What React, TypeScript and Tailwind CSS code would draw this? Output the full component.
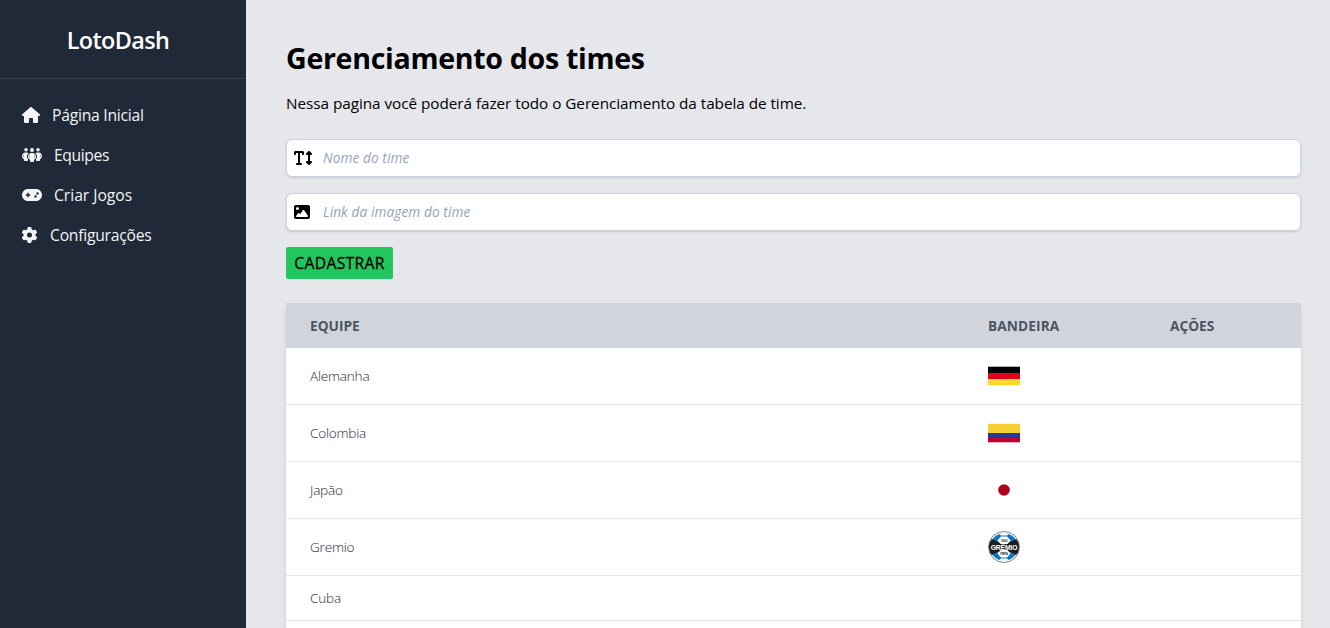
import type { ReactNode } from "react";
import { FaGamepad, FaGear, FaHouse, FaImage, FaPeopleGroup, FaTextHeight } from "react-icons/fa6";

function GermanyFlag() {
  return (
    <svg width="32" height="20" viewBox="0 0 32 20" className="block">
      <rect y="0.7" width="32" height="7" fill="#000" />
      <rect y="7" width="32" height="6.3" fill="#e3001b" />
      <rect y="13" width="32" height="6" fill="#fcd924" />
    </svg>
  );
}

function ColombiaFlag() {
  return (
    <svg width="32" height="20" viewBox="0 0 32 20" className="block">
      <rect y="0.8" width="32" height="10" fill="#f5d033" />
      <rect y="10" width="32" height="5" fill="#233a94" />
      <rect y="14.7" width="32" height="4.6" fill="#c00030" />
    </svg>
  );
}

function JapanFlag() {
  return (
    <svg width="32" height="20" viewBox="0 0 32 20" className="block">
      <rect width="32" height="20" fill="#fff" />
      <circle cx="16" cy="10" r="5.8" fill="#b0001c" />
    </svg>
  );
}

function GremioCrest() {
  return (
    <svg width="32" height="32" viewBox="0 0 32 32" className="block">
      <circle cx="16" cy="16" r="15.5" fill="#fff" stroke="#666" strokeWidth="0.8" />
      <circle cx="16" cy="16" r="13.8" fill="#0b74c4" />
      <path d="M11 2.800Q16 1.200 21 2.800L19 4.600h-6zM9.500 9.500l3.500-4h6l3.500 4-2 3.500h-9zM11 29.200Q16 30.800 21 29.200L19 27.400h-6zM9.500 22.500l3.500 4h6l3.500-4-2-3.500h-9z" fill="#fff" />
      <path d="M4 8Q16 16 28 8Q31 11 31 16Q31 21 28 24Q16 16 4 24Q1 21 1 16Q1 11 4 8Z" fill="#1c1c1c" />
      <path d="M10.500 8.500l3-2.500h5l3 2.500-1.500 4.300q-4 .8-8 0zM10.500 23.500l3 2.500h5l3-2.500-1.500-4.300q-4-.8-8 0z" fill="#fff" />
      <text x="16" y="18.700" textAnchor="middle" textLength="26.500" lengthAdjust="spacingAndGlyphs" fontFamily="Liberation Sans, sans-serif" fontWeight="700" fontSize="7.200" fill="#fff">GRÊMIO</text>
      <text x="16" y="10.500" textAnchor="middle" fontFamily="Liberation Sans, sans-serif" fontWeight="700" fontSize="3.400" fill="#333">1903</text>
      <text x="16" y="24.200" textAnchor="middle" fontFamily="Liberation Sans, sans-serif" fontWeight="700" fontSize="3.200" fill="#333">FBPA</text>
    </svg>
  );
}

const teams: { name: string; flag?: ReactNode }[] = [
  { name: "Alemanha", flag: <GermanyFlag /> },
  { name: "Colombia", flag: <ColombiaFlag /> },
  { name: "Japão", flag: <JapanFlag /> },
  { name: "Gremio", flag: <GremioCrest /> },
  { name: "Cuba" },
];

function NavItem({ icon, label, text }: { icon: ReactNode; label: string; text: string }) {
  return (
    <a href="#" className="flex h-10 items-center gap-3 pl-[22px] text-base text-gray-100">
      {icon}
      <span className={text}>{label}</span>
    </a>
  );
}

function Field({ icon, placeholder }: { icon: ReactNode; placeholder: string }) {
  return (
    <label className="flex h-[38px] items-center rounded-md border border-[#cbd5e1] bg-white pl-[7px] shadow-sm">
      <span className="w-[29px] shrink-0 text-black">{icon}</span>
      <input
        type="text"
        placeholder={placeholder}
        className="h-full min-w-0 flex-1 bg-transparent pb-px text-[13.7px] tracking-[0.07px] outline-none placeholder:text-[#94a3b8] placeholder:italic"
      />
    </label>
  );
}

export default function App() {
  return (
    <div className="flex h-[628px] overflow-hidden bg-[#e5e7eb] font-['Open_Sans','Noto_Sans',sans-serif] text-black">
      <aside className="w-[246px] shrink-0 bg-[#1f2937]">
        <div className="flex h-[79px] items-center justify-center border-b border-[#374151] pt-1 pr-[10px]">
          <h2 className="text-[23.4px] font-semibold tracking-[-0.6px] text-white">LotoDash</h2>
        </div>
        <nav className="pt-4">
          <NavItem icon={<FaHouse className="h-4 w-[18px]" />} label="Página Inicial" text="pt-0.5 text-[15.7px] tracking-[-0.25px]" />
          <NavItem icon={<FaPeopleGroup className="h-4 w-5" />} label="Equipes" text="pt-0.5 text-[15.7px] tracking-[-0.4px]" />
          <NavItem icon={<FaGamepad className="h-4 w-5" />} label="Criar Jogos" text="pt-0.5 text-[15.7px] tracking-[-0.04px]" />
          <NavItem icon={<FaGear className="h-4 w-4 -translate-x-[0.5px]" />} label="Configurações" text="pt-0.5 text-[15.7px] tracking-[-0.25px]" />
        </nav>
      </aside>

      <main className="min-w-0 flex-1 pt-10 pr-[29px] pl-10">
        <h1 className="text-[28.6px] leading-9 font-bold tracking-[-0.32px] whitespace-nowrap">Gerenciamento dos times</h1>
        <p className="mt-[15px] text-[15.3px] leading-6 tracking-[-0.045px] whitespace-nowrap">
          Nessa pagina você poderá fazer todo o Gerenciamento da tabela de time.
        </p>

        <form className="mt-6 flex flex-col items-start gap-4 *:w-full">
          <Field icon={<FaTextHeight className="h-4 w-[18px]" />} placeholder="Nome do time" />
          <Field icon={<FaImage className="h-4 w-4" />} placeholder="Link da imagem do time" />
          <button type="button" className="h-8 max-w-[107px] rounded-xs bg-[#22c55e] pt-0.5 text-[15.7px] font-medium tracking-[0.3px] whitespace-nowrap [-webkit-text-stroke:0.3px_#000]">
            CADASTRAR
          </button>
        </form>

        <table className="mt-6 w-full table-fixed border-separate border-spacing-0 bg-white text-left text-sm shadow-md">
          <colgroup>
            <col />
            <col className="w-[182px]" />
            <col className="w-[155px]" />
          </colgroup>
          <thead className="bg-[#d1d5db] text-[13.7px] text-[#4b5563]">
            <tr className="h-[45px]">
              <th className="px-6 font-bold">EQUIPE</th>
              <th className="px-6 font-bold tracking-[0.1px]">BANDEIRA</th>
              <th className="px-6 font-bold">AÇÕES</th>
            </tr>
          </thead>
          <tbody className="text-[13.6px] font-light tracking-[-0.22px] text-[#1f2937] *:*:border-b *:*:border-[#e5e7eb]">
            {teams.map((team) => (
              <tr key={team.name} className={team.flag ? "h-[57px]" : "h-[45px]"}>
                <td className="px-6">{team.name}</td>
                <td className="px-6">{team.flag}</td>
                <td className="px-6" />
              </tr>
            ))}
            <tr className="h-[57px]">
              <td colSpan={3} />
            </tr>
          </tbody>
        </table>
      </main>
    </div>
  );
}
